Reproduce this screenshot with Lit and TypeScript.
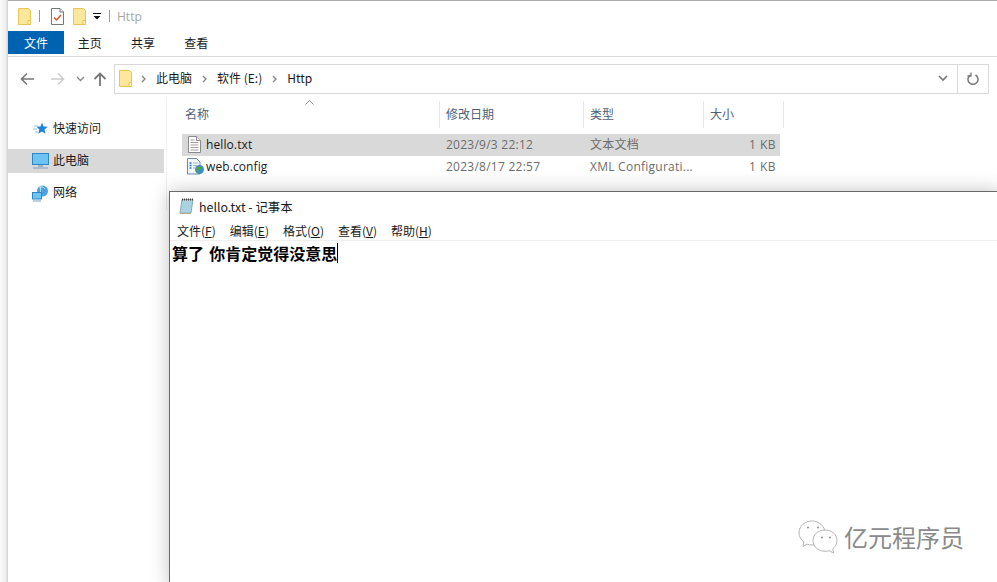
import { LitElement, html, css, svg } from "lit";
import { customElement } from "lit/decorators.js";

const folder = svg`<svg class="fold" width="13" height="17" viewBox="0 0 13 17"><path d="M.5.5h10l2 2v14H.5z" fill="#fde79a" stroke="#e8c556"/><path d="M10 16.500v-4h2.500v4z" fill="#fff3c4" stroke="#e8c556"/></svg>`;
const chev = svg`<svg width="5" height="8" viewBox="0 0 5 8"><path d="M1 1l3 3-3 3" fill="none" stroke="#888" stroke-width="1.400"/></svg>`;

@customElement("app-root")
export class AppRoot extends LitElement {
  static styles = css`
    :host { display: block; width: 997px; height: 582px; position: relative; overflow: hidden; background: #fff;
      font-family: "Noto Sans CJK SC", "Open Sans", sans-serif; font-size: 12px; color: #1a1a1a; }
    .explorer { position: absolute; inset: 0; }
    .gutter { position: absolute; left: 0; top: 0; bottom: 0; width: 8px; background: linear-gradient(90deg, #fbfbfb, #efefef 70%, #cfcfcf); }
    .titlebar { height: 31px; margin-left: 8px; border-top: 1px solid #aaa; box-sizing: border-box; display: flex; align-items: center; padding-left: 10px; }
    .tsep { width: 1px; height: 12px; background: #9a9a9a; flex: none; }
    .sep-a { margin: 0 11px 0 8px; }
    .sep-b { margin-left: 7px; }
    .gap-f { margin-left: 9px; }
    .dropdown { margin-left: 6px; }
    .ttitle { color: #a5a5a5; font-family: "Open Sans", sans-serif; font-size: 12px; margin-left: 7px; }
    .tabs { height: 26px; margin-left: 8px; display: flex; align-items: flex-start; border-bottom: 1px solid #dcdcdc; box-sizing: border-box; }
    .tab { width: 53.300px; height: 23px; display: flex; align-items: center; justify-content: center; font-size: 12px; padding-right: 2px; box-sizing: border-box; }
    .tab.file { width: 56px; background: #0063b1; color: #fff; padding-right: 0; }
    .nav { margin-left: 8px; height: 40px; display: flex; align-items: center; padding-top: 3px; box-sizing: border-box; }
    .navbtns { width: 106px; display: flex; align-items: center; flex: none; }
    .b1 { margin-left: 12px; }
    .b2 { margin-left: 15px; }
    .b3 { margin-left: 11px; }
    .b4 { margin-left: 8px; }
    .addr { width: 844px; height: 30px; box-sizing: border-box; border: 1px solid #d9d9d9; display: flex; align-items: center; padding-left: 4px; flex: none; }
    .crumbs { flex: 1; display: flex; align-items: center; gap: 10px; font-size: 12px; margin-left: 9px; }
    .crumbs span { margin-bottom: 3px; }
    .refresh { width: 31px; height: 30px; border: 1px solid #d9d9d9; border-left: none; box-sizing: border-box; display: flex; align-items: center; justify-content: center; flex: none; }
    .addr-dd { width: 28px; display: flex; justify-content: center; height: 100%; align-items: center; }
    .body { margin-left: 8px; display: flex; }
    .side { width: 158px; padding-top: 20px; border-right: 1px solid #f0f0f0; height: 93px; }
    .side-item { height: 24px; display: flex; align-items: center; padding-left: 24px; gap: 4px; margin-bottom: 8px; width: 156px; box-sizing: border-box; }
    .side-item span { margin-bottom: 3px; }
    .side-item.sel { background: #d9d9d9; }
    .files { margin-left: 15px; width: 610px; }
    .cols, .row { display: grid; grid-template-columns: 258px 144px 120px 76px; }
    .cols { grid-template-columns: 258px 144px 120px 80px; height: 37px; padding-top: 4px; box-sizing: border-box; color: #4c607a; position: relative; align-items: start; }
    .cols > div { height: 27px; box-sizing: border-box; display: flex; align-items: center; padding: 0 0 3px 6px; border-right: 1px solid #e5e5e5; }
    .cols > div:first-child { padding-left: 3px; }
    .sort { position: absolute; left: 123px; top: 3px; }
    .row { height: 22px; padding-bottom: 2px; box-sizing: border-box; align-items: center; color: #6d6d6d; width: 598px; font-family: "Open Sans", "Noto Sans CJK SC", sans-serif; font-size: 12px; letter-spacing: .25px; }
    .row.sel { background: #d9d9d9; }
    .row > div { padding-left: 6px; white-space: nowrap; }
    .row .name { color: #1a1a1a; display: flex; align-items: center; padding-left: 5px; letter-spacing: .1px; }
    .row .name svg { width: 19px; flex: none; }
    .row .sz { text-align: right; padding-right: 4px; letter-spacing: .5px; }
    .notepad { position: absolute; left: 169px; top: 191px; right: -4px; bottom: -4px; background: #fff; border: 1px solid #6a6a6a; box-shadow: 0 0 18px rgba(0,0,0,.24); }
    .np-title { height: 28px; display: flex; align-items: center; padding-left: 9px; gap: 5px; font-size: 12.400px; }
    .np-title span { padding-top: 2px; }
    .np-menu { height: 21px; display: flex; align-items: center; padding-left: 7px; gap: 14px; font-size: 12px; border-bottom: 1px solid #efefef; box-sizing: border-box; }
    .np-menu span { padding-top: 1px; }
    .np-text { font-size: 16px; font-weight: 700; color: #000; padding-left: 2px; line-height: 24px; display: flex; align-items: center; word-spacing: 1.500px; }
    .caret { width: 1px; height: 20px; background: #000; }
    .wm { position: absolute; left: 798px; top: 520px; display: flex; align-items: center; gap: 5px; font-size: 24px; color: #8a8a8a; line-height: 32px; }
    .wm span { margin-bottom: 0; }
  `;

  render() {
    return html`
      <div class="explorer">
        <div class="gutter"></div>
        <div class="titlebar">
          ${folder}
          <span class="tsep sep-a"></span>
          <svg width="13" height="17" viewBox="0 0 13 17"><path d="M.5.5h8.500l3.500 3.500v12.500H.5z" fill="#fff" stroke="#777"/><path d="M9 .5v3.500h3.500" fill="#eee" stroke="#777"/><path d="M3 9.500l2.500 2.500 4.500-5" fill="none" stroke="#e0522a" stroke-width="1.500"/></svg>
          <span class="gap-f"></span>
          ${folder}
          <svg class="dropdown" width="10" height="10" viewBox="0 0 10 10"><path d="M1 2h8v1H1zM1.500 5h7L5 8.500z" fill="#111"/></svg>
          <span class="tsep sep-b"></span>
          <span class="ttitle">Http</span>
        </div>
        <div class="tabs">
          <div class="tab file">文件</div>
          <div class="tab">主页</div>
          <div class="tab">共享</div>
          <div class="tab">查看</div>
        </div>
        <div class="nav">
          <div class="navbtns">
            <svg class="b1" width="15" height="14" viewBox="0 0 15 14"><path d="M7 1.500L1.500 7 7 12.500M2 7h12" fill="none" stroke="#777" stroke-width="1.600"/></svg>
            <svg class="b2" width="15" height="14" viewBox="0 0 15 14"><path d="M8 1.500L13.500 7 8 12.500M13 7H1" fill="none" stroke="#ccc" stroke-width="1.600"/></svg>
            <svg class="b3" width="9" height="6" viewBox="0 0 9 6"><path d="M1 1l3.500 3.500L8 1" fill="none" stroke="#888" stroke-width="1.300"/></svg>
            <svg class="b4" width="14" height="14" viewBox="0 0 14 14"><path d="M1.500 7L7 1.500 12.500 7M7 2v12" fill="none" stroke="#777" stroke-width="1.800"/></svg>
          </div>
          <div class="addr">
            ${folder}
            <div class="crumbs">
              ${chev}
              <span>此电脑</span>
              ${chev}
              <span>软件 (E:)</span>
              ${chev}
              <span>Http</span>
            </div>
            <div class="addr-dd"><svg width="10" height="7" viewBox="0 0 10 7"><path d="M1 1l4 4 4-4" fill="none" stroke="#777" stroke-width="1.600"/></svg></div>
          </div>
          <div class="refresh"><svg width="12" height="13" viewBox="0 0 12 13"><path d="M3.500 3a5 5 0 1 0 5 0" fill="none" stroke="#777" stroke-width="1.500"/><path d="M4 .5v3.500H.5" fill="none" stroke="#777" stroke-width="1.300"/></svg></div>
        </div>
        <div class="body">
          <div class="side">
            <div class="side-item"><svg width="17" height="16" viewBox="0 0 17 16"><path d="M10 1.500l1.500 4 4.300.3-3.300 2.800 1 4.200-3.500-2.300-3.700 2.300 1-4.200L4.500 5.800l4-.3z" fill="#1f83dc"/><path d="M2 5h4M1 8h4M3 11h3" stroke="#8cc2ee"/></svg><span>快速访问</span></div>
            <div class="side-item sel"><svg width="17" height="16" viewBox="0 0 17 16"><rect x=".5" y=".5" width="16" height="11" fill="#6fc3f2" stroke="#2d86c8"/><path d="M6 12h5v2H6z" fill="#9ab2c6"/><path d="M1 14.500h15v1H1z" fill="#7a9cb8"/></svg><span>此电脑</span></div>
            <div class="side-item"><svg width="17" height="17" viewBox="0 0 17 17"><circle cx="10.500" cy="6" r="5.500" fill="#4aa3e0"/><path d="M7 3c2-2 5-1 6 1M9 .5c-1 3-1 7 1 11" stroke="#bfe3f8" fill="none"/><rect x=".5" y="7.500" width="9" height="6.500" fill="#6fc3f2" stroke="#2d86c8"/><path d="M1 15.500h8v1H1z" fill="#7a9cb8"/></svg><span>网络</span></div>
          </div>
          <div class="files">
            <div class="cols">
              <div>名称</div><div>修改日期</div><div>类型</div><div>大小</div>
              <svg class="sort" width="9" height="5" viewBox="0 0 9 5"><path d="M.5 4.500l4-4 4 4" fill="none" stroke="#888"/></svg>
            </div>
            <div class="row sel">
              <div class="name"><svg width="19" height="17" viewBox="0 0 19 17"><path d="M1.500.500h8l4 4v12h-12z" fill="#fff" stroke="#8a8a8a"/><path d="M9.500.500v4h4" fill="#eee" stroke="#8a8a8a"/><path d="M3.500 4h4M3.500 6.500h8M3.500 9h8M3.500 11.500h8M3.500 14h8" stroke="#a0a0a0"/></svg><span>hello.txt</span></div>
              <div>2023/9/3 22:12</div><div>文本文档</div><div class="sz">1 KB</div>
            </div>
            <div class="row">
              <div class="name"><svg width="19" height="17" viewBox="0 0 19 17"><path d="M.5.500h9l3.500 3.500v12H.5z" fill="#f4f8fc" stroke="#6f87a8"/><path d="M2.500 5h2M2.500 7.500h2M2.500 10h2" stroke="#2e6fc0" stroke-width="1.300"/><path d="M6 5h5M6 7.500h4M6 10h2" stroke="#9fb6d2"/><circle cx="12.500" cy="11.500" r="4.500" fill="#3a8fd0"/><path d="M9.500 9.500c2-2 4-1 4.500 0s-1 2-2 2-1 2 0 4c-2 0-3.500-3-2.500-6z" fill="#4fa545"/></svg><span>web.config</span></div>
              <div>2023/8/17 22:57</div><div>XML Configurati...</div><div class="sz">1 KB</div>
            </div>
          </div>
        </div>
      </div>
      <div class="notepad">
        <div class="np-title"><svg width="15" height="16" viewBox="0 0 15 16"><path d="M3 1.500h11l-2 13.500H1z" fill="#a9d3e2" stroke="#8fa8b0"/><path d="M1 15.500h11" stroke="#b8a988"/><path d="M3 1.500h11" stroke="#444" stroke-dasharray="1 1" stroke-width="2"/></svg><span>hello.txt - 记事本</span></div>
        <div class="np-menu">
          <span>文件(<u>F</u>)</span><span>编辑(<u>E</u>)</span><span>格式(<u>O</u>)</span><span>查看(<u>V</u>)</span><span>帮助(<u>H</u>)</span>
        </div>
        <div class="np-text"><span>算了 你肯定觉得没意思</span><span class="caret"></span></div>
      </div>
      <div class="wm">
        <svg width="41" height="34" viewBox="0 0 41 34"><g fill="#fff" stroke="#ababab" stroke-width=".9"><path d="M14 1c7 0 13 5 13 12s-6 12-13 12c-2 0-3.500-.3-5-.9L5 26.500l.8-4.700C3 19.500 1 16.500 1 13 1 6 7 1 14 1z"/><path d="M27 10c6.500 0 12 4.300 12 10.500 0 3.500-1.700 6.300-4.300 8.300l1 4.200-4.600-2.300c-1.300.4-2.700.6-4.100.6-6.500 0-12-4.500-12-10.800S20.500 10 27 10z"/></g><g fill="#999"><circle cx="10" cy="7.500" r="1.100"/><circle cx="20" cy="7.500" r="1.100"/><circle cx="24" cy="17.500" r="1.100"/><circle cx="32" cy="17.500" r="1.100"/></g></svg>
        <span>亿元程序员</span>
      </div>
    `;
  }
}
